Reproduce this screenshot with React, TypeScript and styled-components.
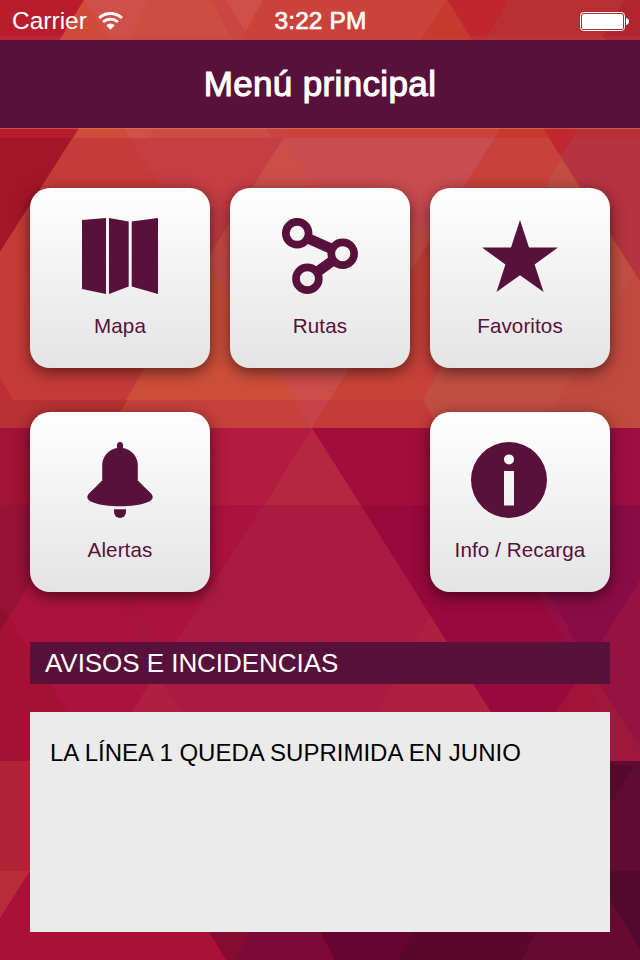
import React from "react";
import styled, { createGlobalStyle } from "styled-components";

const PLUM = "#58113b";

const GlobalStyle = createGlobalStyle`
  body { margin: 0; background: #aa123c; font-family: "Liberation Sans", Arial, sans-serif; }
  * { box-sizing: border-box; }
`;

const Screen = styled.div`
  position: relative;
  isolation: isolate;
  width: 640px;
  height: 960px;
  overflow: hidden;
  display: flex;
  flex-direction: column;
`;

const Backdrop = styled.svg`
  position: absolute;
  inset: 0;
  z-index: -1;
`;

const StatusBar = styled.div`
  height: 40px;
  padding: 0 11px 0 12px;
  display: grid;
  grid-template-columns: 1fr auto 1fr;
  align-items: center;
  color: #fff;
  font-size: 24.5px;
  line-height: 40px;
`;

const Carrier = styled.div`
  display: flex;
  align-items: center;
  gap: 11px;
  height: 40px;
  padding-top: 1px;
`;

const Clock = styled.div`
  padding-top: 1px;
  letter-spacing: 0.1px;
  -webkit-text-stroke: 0.7px #fff;
`;

const Battery = styled.svg`
  justify-self: end;
`;

const TitleBar = styled.header`
  height: 88px;
  background: ${PLUM};
  display: flex;
  align-items: center;
  justify-content: center;
`;

const Title = styled.h1`
  margin: 0;
  color: #fff;
  font-size: 35px;
  font-weight: 400;
  letter-spacing: 0.35px;
  -webkit-text-stroke: 1.1px #fff;
`;

const Menu = styled.nav`
  display: grid;
  grid-template-columns: repeat(3, 180px);
  grid-auto-rows: 180px;
  gap: 44px 20px;
  padding: 60px 30px 0;
`;

const Tile = styled.button<{ $column: number }>`
  grid-column: ${(p) => p.$column};
  display: flex;
  flex-direction: column;
  align-items: center;
  padding: 30px 0 0;
  border: 0;
  border-radius: 20px;
  background: linear-gradient(#fff, #e4e4e4);
  box-shadow: 0 4px 16px rgba(0, 0, 0, 0.55);
  color: ${PLUM};
  font: 20.6px/24px "Liberation Sans", Arial, sans-serif;
  letter-spacing: 0.1px;
`;

const TileIcon = styled.svg<{ $shift?: number }>`
  display: block;
  margin-bottom: 20px;
  transform: translateX(${(p) => p.$shift ?? 0}px);
  fill: ${PLUM};
`;

const SectionHeading = styled.h2`
  margin: 50px 30px 28px;
  height: 42px;
  padding-left: 15px;
  background: ${PLUM};
  color: #fff;
  font-size: 26px;
  font-weight: 400;
  letter-spacing: -0.05px;
  line-height: 43px;
`;

const NoticePanel = styled.section`
  margin: 0 30px;
  height: 220px;
  padding: 26px 20px;
  background: #ebebeb;
  color: #000;
  font-size: 24px;
  line-height: 30px;
`;

/* Triangular mosaic: each entry is [fill, points], painted back to front. */
const facets: [string, string][] = [
  // strip behind the status bar
  ["#cf5048", "0,0 640,0 640,40 0,40"],
  ["#b91d2d", "0,0 84,0 60,40 0,40"],
  ["#d14b3a", "84,0 60,40 111,40"],
  ["#cc4d44", "148,0 130,40 232,40 211,0"],
  ["#ca4641", "211,0 232,40 250,40 226,0"],
  ["#cb423a", "263,0 241,40 420,40 447,0"],
  ["#c8392d", "447,0 420,40 472,40"],
  ["#bf272d", "447,0 472,40 487,40 509,0"],
  ["#b83033", "509,0 487,40 640,40 640,0"],
  ["#b02530", "624,0 603,36 606,40 640,40 640,0"],
  ["rgba(190,70,90,0.22)", "0,36 640,36 640,40 0,40"],
  // upper warm field
  ["#c63b37", "0,128 640,128 640,428 0,428"],
  ["#a31627", "0,128 79,128 0,252"],
  ["#c63d44", "123,128 290,128 206,260"],
  ["#c63b37", "0,252 79,128 123,128 206,260 110,420 0,400"],
  ["#cd4f3a", "206,260 312,428 110,428"],
  ["#cb4e49", "290,128 206,260 312,428 501,128"],
  ["#c94c50", "285,138 316,188 350,240 440,225 501,128"],
  ["#c8413a", "501,128 312,428 640,428 640,281 543,128"],
  ["#c94436", "345,375 380,320 423,400 406,428 312,428"],
  ["#c24e42", "579,128 422,400 438,428 640,428 640,281 560,157"],
  ["#c14a3e", "640,265 541,428 640,428"],
  ["#b63341", "543,128 640,128 640,281"],
  ["#bf2830", "543,128 579,128 561,157"],
  ["#bc2e34", "0,378 30,428 0,428"],
  // lighter strip right under the title bar
  ["#b81c2c", "0,128 79,128 73,138 0,138"],
  ["#d14b3a", "79,128 123,128 129,138 73,138"],
  ["#cf5147", "123,128 155,128 149,138 129,138"],
  ["#cb4c43", "155,128 149,138 272,138 266,128"],
  ["#c94541", "266,128 272,138 285,138 290,128"],
  ["#cb423a", "290,128 285,138 495,138 501,128"],
  ["#c8392d", "501,128 495,138 549,138 543,128"],
  ["#b92f32", "579,128 573,138 640,138 640,128"],
  ["rgba(230,130,100,0.5)", "0,128 640,128 640,129 0,129"],
  // transition strip
  ["#b83135", "0,400 128,400 110,428 0,428"],
  ["#c6413b", "128,400 110,428 312,428 295,400"],
  ["#c84249", "295,400 312,428 329,400"],
  ["#c63b38", "329,400 312,428 439,428 423,400"],
  // magenta field
  ["#ac123f", "0,428 640,428 640,761 0,761"],
  ["#a01238", "0,428 125,428 30,582 0,632"],
  ["#b51a3f", "125,428 312,428 264,505 80,505"],
  ["#a21239", "0,428 60,428 60,505 0,505"],
  ["#971239", "0,505 76,505 9,617 0,605"],
  ["#8d1030", "0,605 9,617 0,632"],
  ["#a61133", "0,632 9,617 98,761 0,761"],
  ["#a7133e", "112,590 128,590 155,642 144,642"],
  ["#ab1a42", "312,428 100,761 522,761"],
  ["#b6263f", "312,428 264,505 361,505"],
  ["#b01f40", "150,684 132,712 181,712 164,684"],
  ["#af1f40", "430,615 378,712 491,712"],
  ["#a40d3b", "312,428 640,428 640,505 361,505"],
  ["#9d0f43", "560,428 640,428 640,505 510,505"],
  ["#98093c", "361,505 640,505 640,700 550,712 491,712"],
  ["#930f45", "490,505 537,592 588,684 600,684 575,592"],
  ["#8b0c44", "500,505 640,505 640,600 588,663"],
  ["#941340", "640,580 580,676 640,770"],
  ["#a21239", "580,676 555,712 610,750 610,725"],
  ["#a0173e", "580,676 610,725 610,761 640,761 640,748 594,676"],
  // bottom corners
  ["#b22237", "0,761 320,761 320,871 0,871"],
  ["#aa1139", "0,871 320,871 320,960 0,960"],
  ["#b92a3a", "0,871 30,871 0,918"],
  ["#620b32", "320,761 640,761 640,960 320,960"],
  ["#560a2b", "590,761 634,767 610,805 590,830"],
  ["#520a2c", "580,871 640,871 640,949"],
  ["#850b33", "209,932 226,960 235,960 250,932"],
  ["#7d0936", "250,932 235,960 337,960 322,932"],
  ["#660531", "320,932 335,960 397,960 414,932"],
  ["#5c0629", "414,932 397,960 522,960 536,932"],
  ["#680932", "536,932 522,960 640,960 640,949 610,900 590,932"],
];

const bodies = {
  map: (
    <>
      <path d="M0 2 24 0V76L0 71Z" />
      <path d="M27 0 46.700 3.500V68.500L27 76Z" />
      <path d="M49.700 3.500 76 0V76L49.700 68.500Z" />
    </>
  ),
  routes: (
    <g fill="none" stroke={PLUM}>
      <path d="M24 19.500 51 31.500M51 42.500 35 54" strokeWidth="10.500" />
      <circle cx="15.2" cy="15.3" r="11.4" strokeWidth="7.7" />
      <circle cx="60.7" cy="35.7" r="11.4" strokeWidth="7.7" />
      <circle cx="25.4" cy="60.7" r="11.4" strokeWidth="7.7" />
    </g>
  ),
  star: <path d="M38 2 47 29.5H76L52.6 46.4 61.6 74 38 57.2 14.5 74 23.4 46.4 0 29.5H29Z" />,
  bell: (
    <>
      <path d="M35 6V3a3 3 0 0 1 6 0V6A17.700 17.700 0 0 1 55.800 23V38.500L69 51.500C72 54.800 71 58 66 60 52 65.800 24 65.800 10 60 5 58 4 54.800 7 51.500L20.200 38.500V23A17.700 17.700 0 0 1 35 6Z" />
      <path d="M32 67.300H44V70a6 6 0 0 1-12 0Z" />
    </>
  ),
  info: (
    <path
      fillRule="evenodd"
      d="M38 0a38 38 0 1 1 0 76a38 38 0 1 1 0-76ZM38 12.400a5 5 0 1 0 0 10a5 5 0 1 0 0-10ZM33 29V63.500H43V29Z"
    />
  ),
};

const items: { label: string; icon: keyof typeof bodies; column: number; shift?: number }[] = [
  { label: "Mapa", icon: "map", column: 1 },
  { label: "Rutas", icon: "routes", column: 2 },
  { label: "Favoritos", icon: "star", column: 3 },
  { label: "Alertas", icon: "bell", column: 1 },
  { label: "Info / Recarga", icon: "info", column: 3, shift: -11 },
];

export default function App() {
  return (
    <>
      <GlobalStyle />
      <Screen>
        <Backdrop width="640" height="960" aria-hidden="true">
          {facets.map(([fill, points], i) => (
            <polygon key={i} fill={fill} points={points} />
          ))}
        </Backdrop>
        <StatusBar>
          <Carrier>
            Carrier
            <svg width="25" height="20" viewBox="0 0 25 20" fill="none" stroke="#fff">
              <path d="M1.200 7A16.200 16.200 0 0 1 23.800 7" strokeWidth="3" />
              <path d="M5.100 11A10.700 10.700 0 0 1 19.900 11" strokeWidth="2.800" />
              <path d="M12.500 18.800 8.200 14.300a6.200 6.200 0 0 1 8.600 0Z" fill="#fff" stroke="none" />
            </svg>
          </Carrier>
          <Clock>3:22 PM</Clock>
          <Battery width="49" height="20" viewBox="0 0 49 20">
            <rect x="0.500" y="1.500" width="44" height="18" rx="3" fill="none" stroke="#fff" />
            <rect x="2" y="3" width="41" height="15" rx="1.500" fill="#fff" />
            <path d="M46 7c4 .5 4 6.500 0 7Z" fill="#fff" />
          </Battery>
        </StatusBar>
        <TitleBar>
          <Title>Menú principal</Title>
        </TitleBar>
        <Menu>
          {items.map((item) => (
            <Tile key={item.label} $column={item.column}>
              <TileIcon width="76" height="76" viewBox="0 0 76 76" $shift={item.shift}>
                {bodies[item.icon]}
              </TileIcon>
              {item.label}
            </Tile>
          ))}
        </Menu>
        <SectionHeading>AVISOS E INCIDENCIAS</SectionHeading>
        <NoticePanel>LA LÍNEA 1 QUEDA SUPRIMIDA EN JUNIO</NoticePanel>
      </Screen>
    </>
  );
}
